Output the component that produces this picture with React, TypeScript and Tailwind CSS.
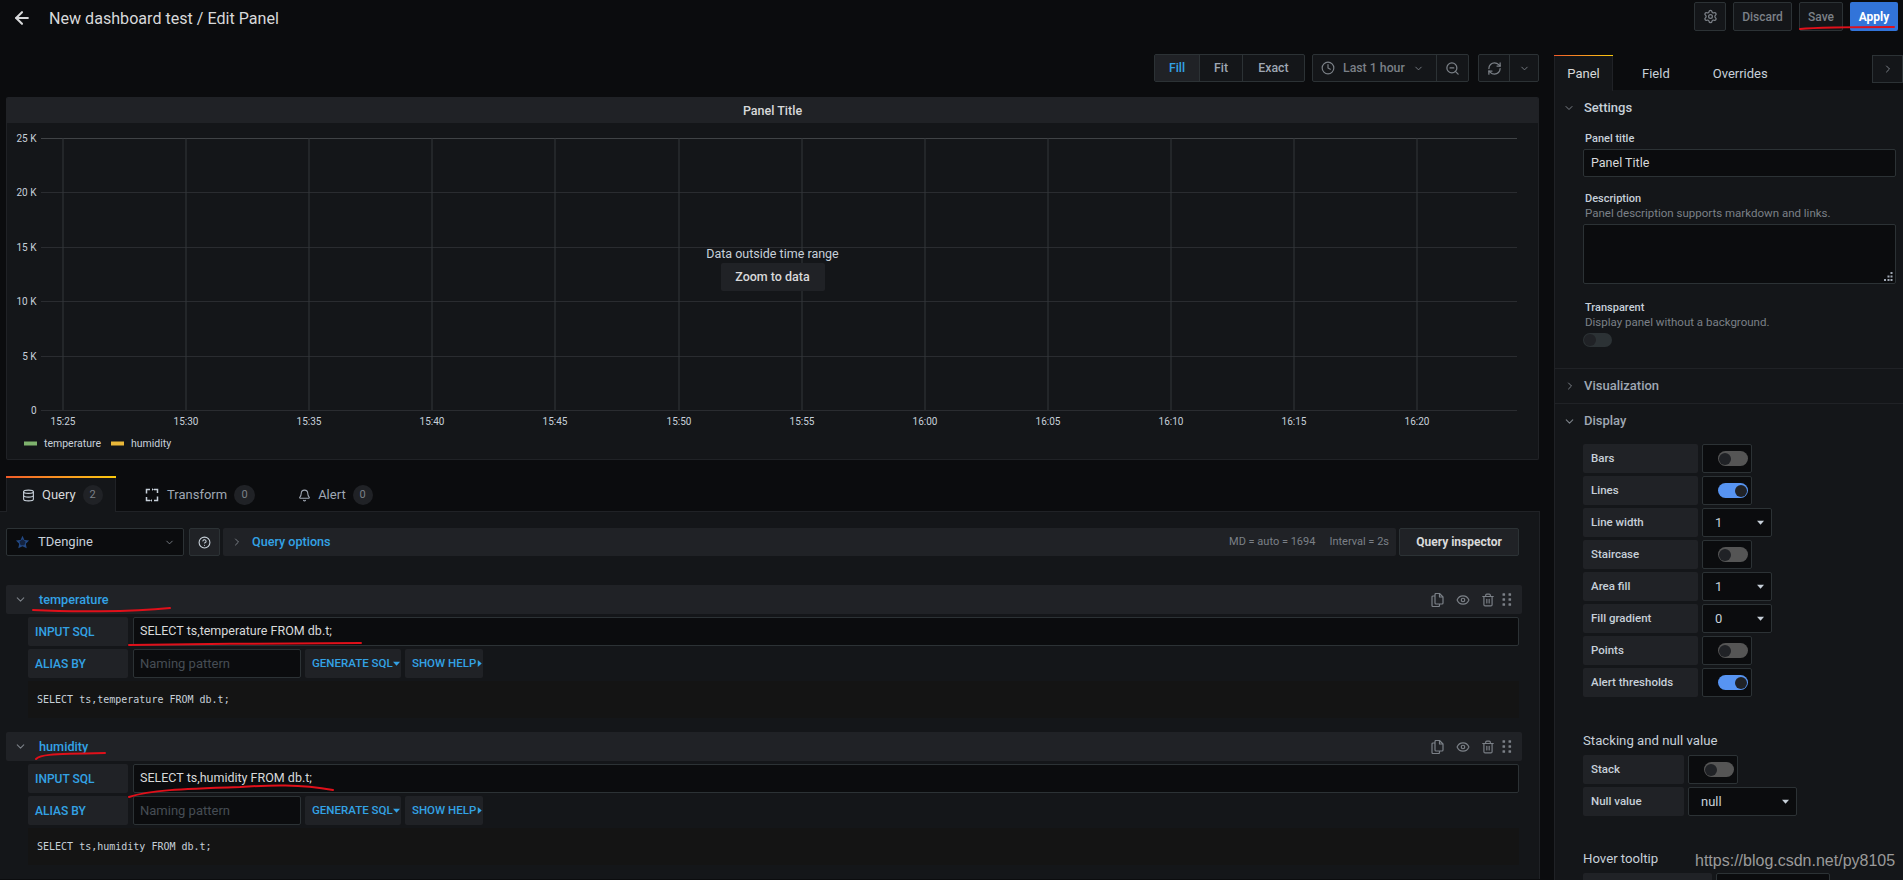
import React from "react";
import { ArrowLeft, Settings, Clock, ZoomOut, RefreshCw, ChevronDown, ChevronRight, Database, Bell, Eye, Trash2, CircleHelp } from "lucide-react";

const Caret = ({ dir = "down" }: { dir?: "down" | "right" }) => (
  <svg width="7" height="7" viewBox="0 0 8 8" className="shrink-0">
    {dir === "down" ? <path d="M0 2h8L4 6.5z" fill="currentColor" /> : <path d="M2 0v8l4.5-4z" fill="currentColor" />}
  </svg>
);

const Grip = () => (
  <svg width="10" height="13" viewBox="0 0 10 13" fill="#7b8087">
    {[1.5, 6.5, 11.5].map((y) => (
      <g key={y}>
        <rect x="0.5" y={y - 1.3} width="2.6" height="2.6" rx="0.6" />
        <rect x="6.5" y={y - 1.3} width="2.6" height="2.6" rx="0.6" />
      </g>
    ))}
  </svg>
);

const CopyIcon = () => (
  <svg width="13" height="14" viewBox="0 0 13 14" fill="none" stroke="currentColor" strokeWidth="1.2" strokeLinejoin="round">
    <path d="M4 3H2a1 1 0 0 0-1 1v8.5a1 1 0 0 0 1 1h5.5a1 1 0 0 0 1-1V11" />
    <path d="M4 1.5a1 1 0 0 1 1-1h3.5L12 4v6a1 1 0 0 1-1 1H5a1 1 0 0 1-1-1z" />
    <path d="M8.5 .5V4H12" />
  </svg>
);

const TransformIcon = () => (
  <svg width="14" height="14" viewBox="0 0 14 14" fill="none" stroke="currentColor" strokeWidth="1.5">
    <path d="M1.5 5.5V1.5H5M9 1.5h3.5V5M12.5 8.5v4H9M5 12.5H1.5V9" />
    <path d="M7 .2v2.6L9 1.5zM7 11.2v2.6L5 12.5z" fill="currentColor" stroke="none" />
  </svg>
);

const Sw = ({ on = false }: { on?: boolean }) => (
  <div className="w-[50px] h-[29px] bg-[#0b0c0e] border border-[#2c3235] rounded-[2px] flex items-center justify-end pr-[3px] shrink-0">
    <div className={`w-[30px] h-[15px] rounded-full flex items-center px-[1px] ${on ? "bg-[#5794f2] justify-end" : "bg-[#555555] justify-start"}`}>
      <div className="w-[12px] h-[12px] rounded-full bg-[#202226]" />
    </div>
  </div>
);

const Sel = ({ v, w }: { v: string; w: string }) => (
  <div className={`${w} h-[29px] bg-[#0b0c0e] border border-[#2c3235] rounded-[2px] flex items-center justify-between pl-[12px] pr-[7px] text-[13px] text-[#c7d0d9] shrink-0`}>
    <span>{v}</span>
    <Caret />
  </div>
);

const Row = ({ label, w = "w-[115px]", children }: { label: string; w?: string; children: React.ReactNode }) => (
  <div className="flex gap-[4px] h-[29px] mb-[3px]">
    <div className={`${w} bg-[#202226] rounded-[2px] flex items-center pl-[8px] text-[11.5px] font-medium text-[#c7d0d9] shrink-0`}>{label}</div>
    {children}
  </div>
);

const QueryRow = ({ name, sql }: { name: string; sql: string }) => (
  <div className="mb-[14px]">
    <div className="h-[29px] w-[1516px] ml-[6px] bg-[#202226] rounded-[2px] flex items-center">
      <ChevronDown size={13} className="ml-[8px] text-[#7b8087]" />
      <span className="ml-[12px] text-[12.7px] font-medium text-[#33a2e5]">{name}</span>
      <div className="ml-auto mr-[10px] flex items-center text-[#7b8087]">
        <CopyIcon />
        <Eye size={14} className="ml-[12px]" />
        <Trash2 size={14} className="ml-[11px]" />
        <span className="ml-[7px] flex"><Grip /></span>
      </div>
    </div>
    <div className="ml-[28px] mt-[3px] w-[1491px]">
      <div className="flex gap-[5px] h-[29px]">
        <div className="w-[100px] bg-[#202226] rounded-[2px] flex items-center pl-[7px] text-[12px] font-medium text-[#33a2e5]">INPUT SQL</div>
        <div className="flex-1 bg-[#0b0c0e] border border-[#2c3235] rounded-[2px] flex items-center pl-[6px] text-[12.5px] text-[#d8d9da]">{sql}</div>
      </div>
      <div className="flex mt-[3px] h-[29px]">
        <div className="w-[100px] bg-[#202226] rounded-[2px] flex items-center pl-[7px] text-[12px] font-medium text-[#33a2e5]">ALIAS BY</div>
        <div className="ml-[5px] w-[168px] bg-[#0b0c0e] border border-[#2c3235] rounded-[2px] flex items-center pl-[6px] text-[13px] text-[#464c54]">Naming pattern</div>
        <div className="ml-[4px] w-[96px] bg-[#202226] rounded-[2px] flex items-center pl-[7px] text-[11.5px] font-medium text-[#33a2e5] whitespace-nowrap">GENERATE SQL<Caret /></div>
        <div className="ml-[4px] w-[78px] bg-[#202226] rounded-[2px] flex items-center pl-[7px] text-[11.5px] font-medium text-[#33a2e5] whitespace-nowrap">SHOW HELP<Caret dir="right" /></div>
      </div>
      <div className="mt-[3px] h-[37px] bg-[#141414] flex items-center pl-[9px] text-[10px] text-[#c7d0d9] font-['DejaVu_Sans_Mono',monospace]">{sql}</div>
    </div>
  </div>
);

const xs = ["15:25", "15:30", "15:35", "15:40", "15:45", "15:50", "15:55", "16:00", "16:05", "16:10", "16:15", "16:20"];
const ys = [["25 K", 15], ["20 K", 69], ["15 K", 124], ["10 K", 178], ["5 K", 233], ["0", 287]] as const;

const Chart = () => (
  <svg width="1531" height="336" className="block">
    {ys.map(([t, y]) => (
      <g key={t}>
        <line x1="34" x2="1510" y1={y + 0.5} y2={y + 0.5} stroke={t === "25 K" ? "#404346" : "#2a2c30"} />
        <text x="29.5" y={y + 3.5} textAnchor="end" fontSize="10" fill="#c7d0d9">{t}</text>
      </g>
    ))}
    {xs.map((t, i) => {
      const x = 55.5 + Math.round(i * 123.1);
      return (
        <g key={t}>
          <line x1={x + 0.5} x2={x + 0.5} y1="15" y2="287" stroke="#33363a" />
          <text x={x + 0.5} y="301.5" textAnchor="middle" fontSize="10" fill="#c7d0d9">{t}</text>
        </g>
      );
    })}
    <rect x="17" y="318.5" width="13" height="4" fill="#7eb26d" />
    <text x="37" y="323.5" fontSize="10.5" fill="#c7d0d9">temperature</text>
    <rect x="104" y="318.5" width="13" height="4" fill="#eab839" />
    <text x="124" y="323.5" fontSize="10.5" fill="#c7d0d9">humidity</text>
  </svg>
);

export default function App() {
  return (
    <div className="relative w-[1903px] h-[880px] overflow-hidden bg-[#0b0c0e] text-[#c7d0d9] font-['Roboto',sans-serif]">
      {/* top bar */}
      <div className="h-[54px] flex items-start">
        <ArrowLeft size={20} strokeWidth={2.5} className="ml-[12px] mt-[8px] text-[#d8d9da]" />
        <div className="ml-[17px] mt-[7px] text-[16.1px] text-[#d8d9da]">New dashboard test / Edit Panel</div>
        <div className="ml-auto mr-[5px] mt-[2px] flex h-[29px] items-stretch">
          <div className="w-[32px] border border-[#2c3235] bg-[#141619] rounded-[2px] flex items-center justify-center text-[#7b8087]"><Settings size={15} /></div>
          <div className="ml-[7px] w-[59px] border border-[#2c3235] bg-[#141619] rounded-[2px] flex items-center justify-center text-[12px] font-medium text-[#7b8087]">Discard</div>
          <div className="ml-[7px] w-[44px] border border-[#2c3235] bg-[#141619] rounded-[2px] flex items-center justify-center text-[12px] font-medium text-[#7b8087]">Save</div>
          <div className="ml-[7px] w-[48px] bg-[#3274d9] rounded-[2px] flex items-center justify-center text-[12px] font-bold text-white">Apply</div>
        </div>
      </div>

      <div className="flex h-[826px]">
        {/* left column */}
        <div className="w-[1554px] shrink-0">
          <div className="h-[28px] flex justify-end pr-[15px] text-[12.3px] font-medium">
            <div className="flex border border-[#2c3235] rounded-[2px] bg-[#141619]">
              <div className="w-[44px] bg-[#202226] flex items-center justify-center text-[#33a2e5]">Fill</div>
              <div className="w-[43px] border-l border-[#2c3235] flex items-center justify-center text-[#9fa7b3]">Fit</div>
              <div className="w-[62px] border-l border-[#2c3235] flex items-center justify-center text-[#9fa7b3]">Exact</div>
            </div>
            <div className="ml-[7px] flex border border-[#2c3235] rounded-[2px] bg-[#141619] text-[#7b8087]">
              <div className="w-[123px] flex items-center pl-[8px]">
                <Clock size={14} />
                <span className="ml-[8px]">Last 1 hour</span>
                <ChevronDown size={11} className="ml-[8px]" />
              </div>
              <div className="w-[32px] border-l border-[#2c3235] flex items-center justify-center"><ZoomOut size={15} /></div>
            </div>
            <div className="ml-[9px] flex border border-[#2c3235] rounded-[2px] bg-[#141619] text-[#7b8087]">
              <div className="w-[30px] flex items-center justify-center"><RefreshCw size={15} /></div>
              <div className="w-[29px] border-l border-[#2c3235] flex items-center justify-center"><ChevronDown size={11} /></div>
            </div>
          </div>

          {/* graph panel */}
          <div className="relative mt-[15px] ml-[6px] w-[1533px] h-[363px] bg-[#141619] border border-[#202226] border-t-0 rounded-[2px] overflow-hidden">
            <div className="h-[26px] bg-[#202226] flex items-center justify-center pt-[2px] text-[12.5px] font-medium text-[#d8d9da]">Panel Title</div>
            <Chart />
            <div className="absolute left-0 right-0 top-[148px] flex flex-col items-center">
              <div className="text-[12.5px] leading-[18px] text-[#c7d0d9]">Data outside time range</div>
              <div className="w-[104px] h-[28px] bg-[#202226] rounded-[2px] flex items-center justify-center text-[12.5px] font-medium text-[#d8d9da]">Zoom to data</div>
            </div>
          </div>

          {/* tabs */}
          <div className="mt-[16px] h-[36px] flex items-stretch pl-[6px] relative z-10 text-[13px]">
            <div className="w-[110px] bg-[#141619] border-x border-[#202226] rounded-t-[2px] relative flex items-center pl-[15px] pt-[2px]">
              <div className="absolute -left-[1px] -right-[1px] top-0 h-[2px] bg-gradient-to-r from-[#f05a28] to-[#fbca0a]" />
              <Database size={13} />
              <span className="ml-[7px] text-[#d8d9da]">Query</span>
              <span className="ml-[7px] w-[20px] h-[20px] rounded-full bg-[#202226] flex items-center justify-center text-[11px] text-[#7b8087]">2</span>
            </div>
            <div className="ml-[29px] pt-[2px] flex items-center text-[#c7d0d9]">
              <TransformIcon />
              <span className="ml-[8px] text-[#9fa7b3]">Transform</span>
              <span className="ml-[7px] w-[21px] h-[20px] rounded-full bg-[#202226] flex items-center justify-center text-[11px] text-[#7b8087]">0</span>
            </div>
            <div className="ml-[43px] pt-[2px] flex items-center text-[#9fa7b3]">
              <Bell size={13} />
              <span className="ml-[7px]">Alert</span>
              <span className="ml-[7px] w-[20px] h-[20px] rounded-full bg-[#202226] flex items-center justify-center text-[11px] text-[#7b8087]">0</span>
            </div>
          </div>

          {/* query panel */}
          <div className="w-[1540px] h-[368px] bg-[#141619] border-t border-r border-[#202226] -mt-[1px] pt-[16px]">
            <div className="flex h-[28px] pl-[6px]">
              <div className="w-[178px] bg-[#0b0c0e] border border-[#2c3235] rounded-[2px] flex items-center pl-[8px] text-[13px] text-[#c7d0d9]">
                <svg width="15" height="15" viewBox="0 0 16 16"><path d="M8 .8l2 4.4 5 .6-3.5 3.4 1 5L8 12l-4.500 2.200 1-5L1 5.800l5-.6z" fill="#234a86" /><path d="M8 4.500l3.300 2.400-1.300 3.900H6L4.700 6.900z" fill="#14233f" /></svg>
                <span className="ml-[8px]">TDengine</span>
                <ChevronDown size={11} className="ml-auto mr-[8px] text-[#7b8087]" />
              </div>
              <div className="ml-[5px] w-[31px] bg-[#202226] border border-[#2c3235] rounded-[2px] flex items-center justify-center"><CircleHelp size={13} /></div>
              <div className="ml-[3px] w-[1173px] bg-[#202226] rounded-[2px] flex items-center text-[#7b8087]">
                <ChevronRight size={12} className="ml-[8px]" />
                <span className="ml-[9px] text-[12.6px] font-medium text-[#33a2e5]">Query options</span>
                <span className="ml-auto text-[11px]">MD = auto = 1694</span>
                <span className="ml-[14px] mr-[7px] text-[11px]">Interval = 2s</span>
              </div>
              <div className="ml-[3px] w-[120px] bg-[#202226] border border-[#2c3235] rounded-[2px] flex items-center justify-center text-[12px] font-bold text-[#d8d9da]">Query inspector</div>
            </div>
            <div className="mt-[29px]">
              <QueryRow name="temperature" sql="SELECT ts,temperature FROM db.t;" />
              <QueryRow name="humidity" sql="SELECT ts,humidity FROM db.t;" />
            </div>
          </div>
        </div>

        {/* right pane */}
        <div className="flex-1 min-w-0">
          <div className="h-[36px] mt-[1px] flex relative text-[13px]">
            <div className="w-[59px] bg-[#141619] relative flex items-center justify-center pt-[1px] text-[#d8d9da] z-10 border-x border-[#202226]">
              <div className="absolute -left-[1px] -right-[1px] top-0 h-[1px] bg-gradient-to-r from-[#f05a28] to-[#fbca0a]" />
              Panel
            </div>
            <div className="absolute left-0 right-0 bottom-0 h-[1px] bg-[#202226]" />
            <div className="ml-[29px] pt-[1px] flex items-center text-[#c7d0d9]">Field</div>
            <div className="ml-[43px] pt-[1px] flex items-center text-[#c7d0d9]">Overrides</div>
            <div className="absolute right-0 top-0 w-[31px] h-[28px] border border-[#2c3235] bg-[#141619] flex items-center justify-center text-[#7b8087]"><ChevronRight size={12} /></div>
          </div>
          <div className="h-[790px] bg-[#141619] border-l border-[#202226] pl-[28px] relative -mt-[1px]">
            <div className="h-[36px] flex items-center text-[13px] font-medium -ml-[20px]">
              <ChevronDown size={12} className="text-[#7b8087]" />
              <span className="ml-[9px]">Settings</span>
            </div>
            <div className="pl-[2px] text-[11px] font-medium leading-[14px] mt-[6px] text-[#c7d0d9]">Panel title</div>
            <div className="mt-[3px] w-[313px] h-[28px] bg-[#0b0c0e] border border-[#2c3235] rounded-[2px] flex items-center pl-[7px] text-[12.5px] text-[#d8d9da]">Panel Title</div>
            <div className="pl-[2px] text-[11px] font-medium leading-[14px] mt-[15px]">Description</div>
            <div className="pl-[2px] text-[11.5px] leading-[14px] text-[#7b8087]">Panel description supports markdown and links.</div>
            <div className="mt-[4px] w-[313px] h-[60px] bg-[#0b0c0e] border border-[#2c3235] rounded-[2px] flex items-end justify-end p-[2px]">
              <svg width="9" height="9" viewBox="0 0 9 9" fill="#9fa7b3">
                <rect x="6.5" y="0" width="2" height="2" />
                <rect x="3.500" y="3.500" width="2" height="2" />
                <rect x="6.500" y="3.500" width="2" height="2" />
                <rect x="0" y="7" width="2" height="2" />
                <rect x="3.500" y="7" width="2" height="2" />
                <rect x="6.500" y="7" width="2" height="2" />
              </svg>
            </div>
            <div className="pl-[2px] text-[11px] font-medium leading-[14px] mt-[17px]">Transparent</div>
            <div className="pl-[2px] text-[11.5px] leading-[14px] text-[#7b8087]">Display panel without a background.</div>
            <div className="mt-[4px] w-[29px] h-[14px] rounded-full bg-[#2c3235] flex items-center px-[1px]"><div className="w-[12px] h-[12px] rounded-full bg-[#202226]" /></div>
            <div className="-ml-[28px] mt-[21px] border-t border-[#202226] h-[35px] flex items-center pl-[9px]">
              <ChevronRight size={12} className="text-[#7b8087]" />
              <span className="ml-[8px] text-[13px] font-medium text-[#9fa7b3]">Visualization</span>
            </div>
            <div className="-ml-[28px] border-t border-[#202226] h-[35px] flex items-center pl-[8px]">
              <ChevronDown size={13} className="text-[#7b8087]" />
              <span className="ml-[8px] text-[13px] font-medium text-[#9fa7b3]">Display</span>
            </div>
            <div className="mt-[6px]">
              <Row label="Bars"><Sw /></Row>
              <Row label="Lines"><Sw on /></Row>
              <Row label="Line width"><Sel v="1" w="w-[70px]" /></Row>
              <Row label="Staircase"><Sw /></Row>
              <Row label="Area fill"><Sel v="1" w="w-[70px]" /></Row>
              <Row label="Fill gradient"><Sel v="0" w="w-[70px]" /></Row>
              <Row label="Points"><Sw /></Row>
              <Row label="Alert thresholds"><Sw on /></Row>
            </div>
            <div className="mt-[35px] text-[13.2px] leading-[18px]">Stacking and null value</div>
            <div className="mt-[5px]">
              <Row label="Stack" w="w-[101px]"><Sw /></Row>
              <Row label="Null value" w="w-[101px]"><Sel v="null" w="w-[109px]" /></Row>
            </div>
            <div className="mt-[34px] text-[13.2px] leading-[18px]">Hover tooltip</div>
            <div className="mt-[5px] flex gap-[4px] h-[29px]">
              <div className="w-[129px] bg-[#202226] rounded-[2px]" />
              <div className="w-[114px] bg-[#0b0c0e] border border-[#2c3235] rounded-[2px]" />
            </div>
          </div>
        </div>
      </div>

      {/* watermark */}
      <div className="absolute left-[1695px] top-[851px] text-[16px] leading-[20px] text-[#9a9a9a] font-['Liberation_Sans',sans-serif]">https://blog.csdn.net/py8105</div>

      {/* red pen marks over the page */}
      <svg className="absolute inset-0 pointer-events-none" width="1903" height="880" fill="none" stroke="#e0101a" strokeWidth="2" strokeLinecap="round">
        <path d="M1800 29C1820 27 1850 27 1894 27" />
        <path d="M33 610C70 612 130 612 170 608" />
        <path d="M129 645C200 644 300 643 361 643" />
        <path d="M36 759C40 755 45 754 105 753" />
        <path d="M129 797C150 790 180 789 240 787C270 785 300 784 333 790" />
      </svg>
    </div>
  );
}
